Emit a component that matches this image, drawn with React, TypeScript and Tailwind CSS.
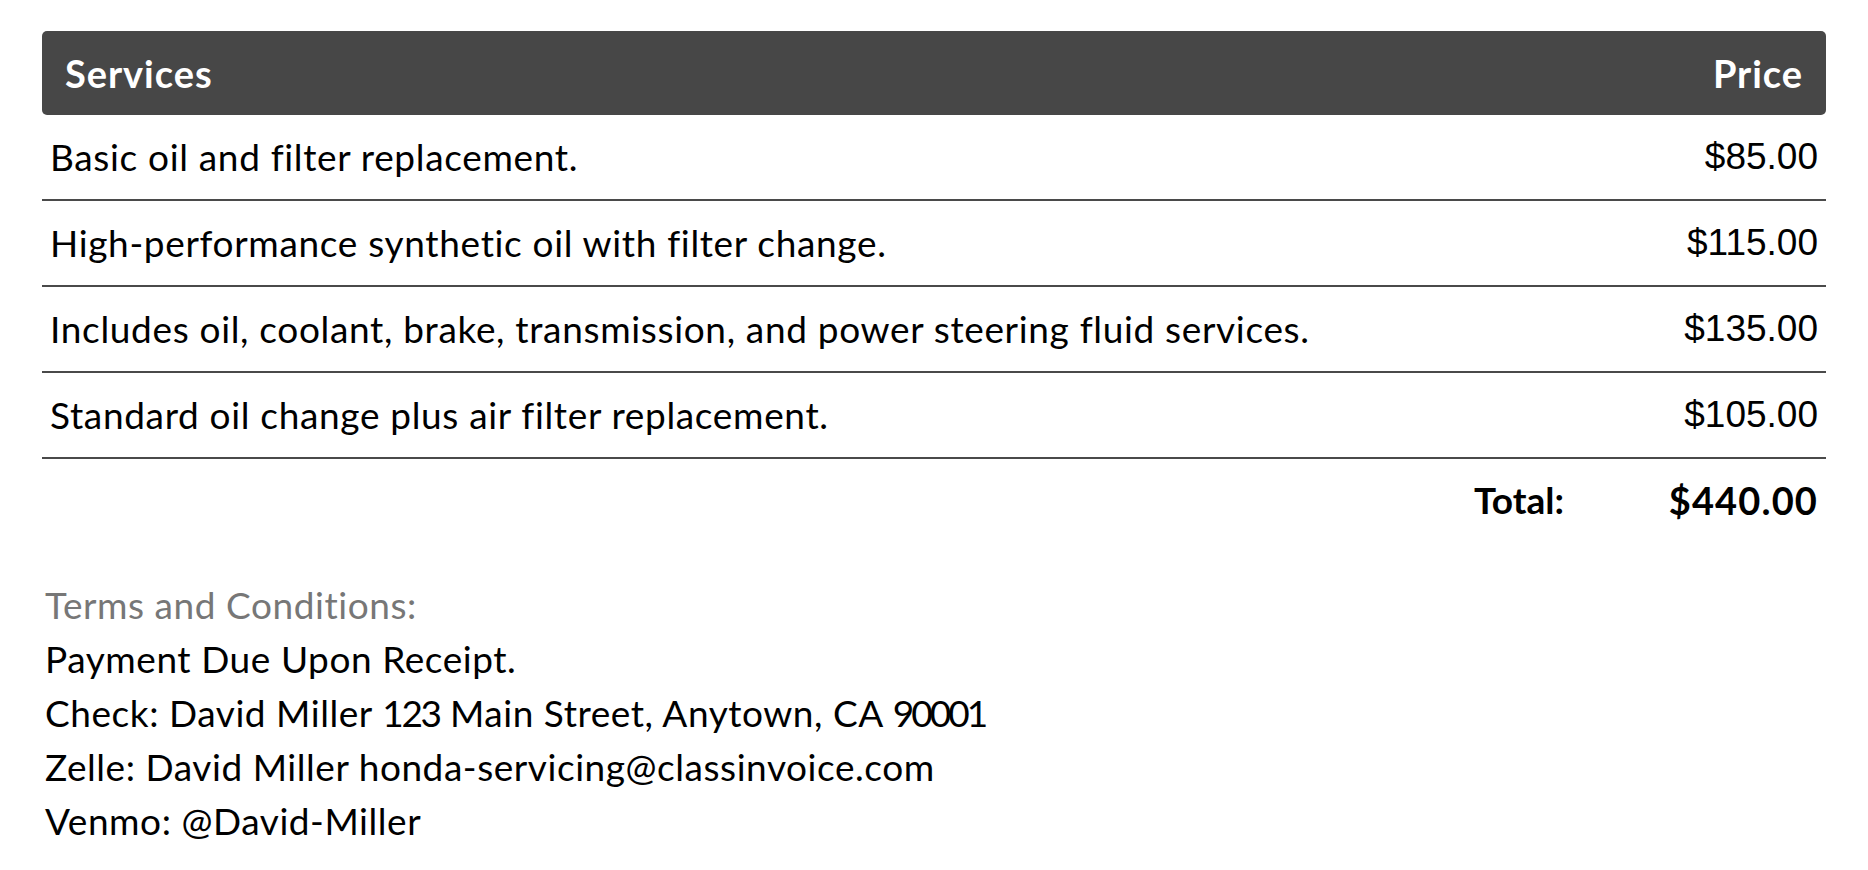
const services = [
  { label: 'Basic oil and filter replacement.', price: '$85.00' },
  { label: 'High-performance synthetic oil with filter change.', price: '$115.00' },
  { label: 'Includes oil, coolant, brake, transmission, and power steering fluid services.', price: '$135.00' },
  { label: 'Standard oil change plus air filter replacement.', price: '$105.00' },
];

export default function App() {
  return (
    <div className="min-h-[870px] bg-white px-[42px] pt-[31px] font-['Lato','Noto_Sans',sans-serif] text-black">
      {/* Header bar */}
      <div className="flex h-[84px] items-center justify-between rounded-[5px] bg-[#474747] px-[23px] text-[38px] font-bold tracking-[0.025em] text-white">
        <span>Services</span>
        <span>Price</span>
      </div>

      {/* Line items */}
      {services.map((s) => (
        <div
          key={s.label}
          className="flex h-[86px] items-center justify-between border-b-2 border-[#4a4a4a] px-[8px] text-[37px] tracking-[0.018em]"
        >
          <span>{s.label}</span>
          <span className="font-['Liberation_Sans',Arial,sans-serif] text-[37px] tracking-normal">{s.price}</span>
        </div>
      ))}

      {/* Total */}
      <div className="flex h-[82px] items-center justify-end pr-[8px] text-[38px] font-bold">
        <span className="text-[37px]">Total:</span>
        <span className="w-[254px] text-right tracking-[0.03em]">$440.00</span>
      </div>

      {/* Terms */}
      <div className="mt-[37px] px-[3px] text-[37px] leading-[54px] tracking-[0.015em]">
        <div className="text-[#777777]">Terms and Conditions:</div>
        <div>Payment Due Upon Receipt.</div>
        <div>
          Check: David Miller <span className="tracking-[-0.06em]">123</span> Main Street, Anytown, CA{' '}
          <span className="tracking-[-0.08em]">90001</span>
        </div>
        <div>Zelle: David Miller honda-servicing@classinvoice.com</div>
        <div>Venmo: @David-Miller</div>
      </div>
    </div>
  );
}
